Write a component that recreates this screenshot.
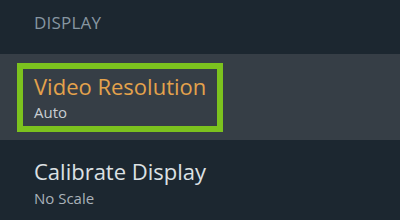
export default function App() {
  const font = { fontFamily: '"Open Sans", "Liberation Sans", sans-serif' }
  return (
    <div className="w-[400px] h-[220px] bg-[#1c2730] overflow-hidden" style={font}>
      <div className="h-[54px] pl-[34px] pt-[12px]">
        <p className="text-[17px] leading-[22px] text-[#8796a1] tracking-[0.2px]">DISPLAY</p>
      </div>
      <div className="h-[86px] bg-[#363e46] pl-[17px] pt-[9px]">
        <div className="w-[206px] h-[69px] border-[6px] border-[#7cc21e] pl-[11px] pt-[3px]">
          <p className="text-[22px] leading-[28px] text-[#e4a24c]">Video Resolution</p>
          <p className="text-[15px] leading-[20px] text-[#c9ced3] mt-[2px]">Auto</p>
        </div>
      </div>
      <div className="h-[80px] pl-[34px] pt-[17px]">
        <p className="text-[22px] leading-[28px] text-[#dde1e4]">Calibrate Display</p>
        <p className="text-[15px] leading-[20px] text-[#a9b2b9] mt-[3px]">No Scale</p>
      </div>
    </div>
  )
}
